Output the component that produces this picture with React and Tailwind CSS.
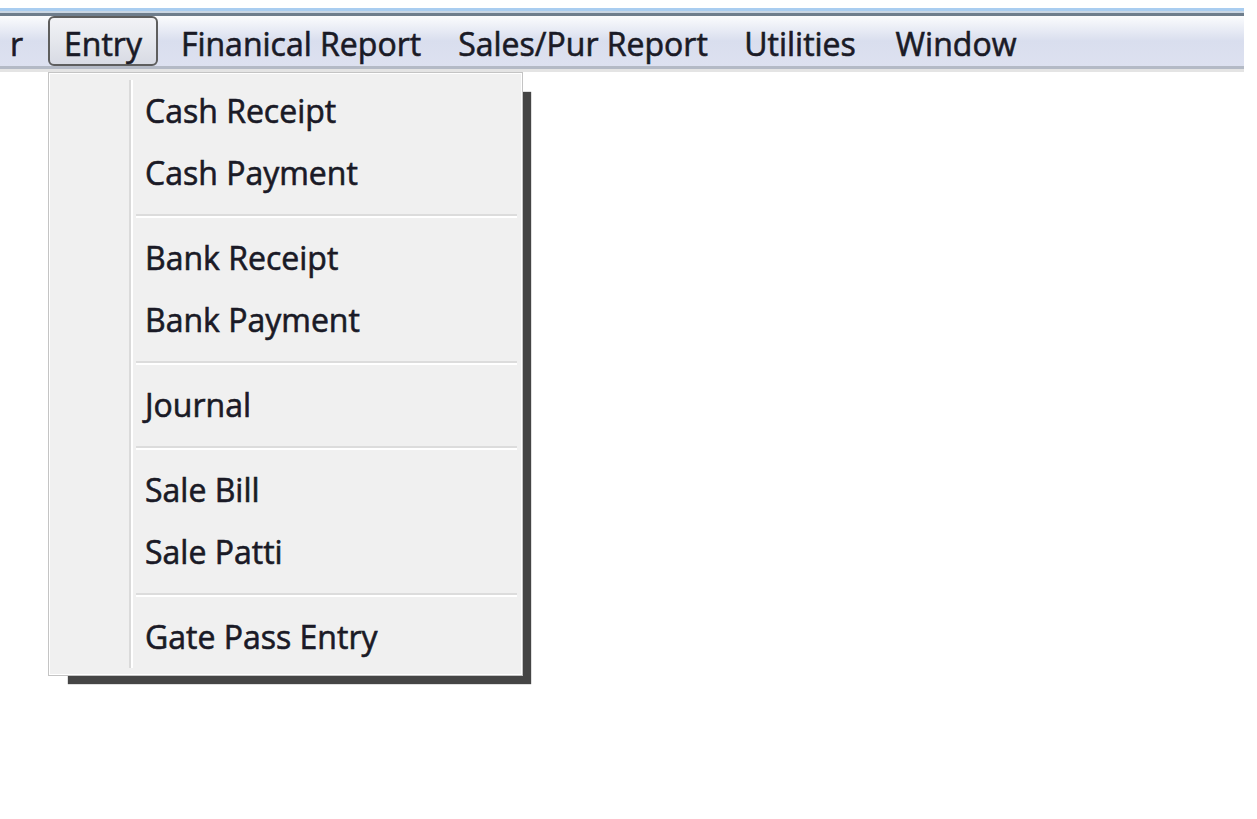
import React from "react";

const menuBar = [
  { label: "Entry", w: "w-[110px]", active: true },
  { label: "Finanical Report", w: "w-[286px]" },
  { label: "Sales/Pur Report", w: "w-[278px]" },
  { label: "Utilities", w: "w-[156px]" },
  { label: "Window", w: "w-[156px]" },
];

const groups = [
  ["Cash Receipt", "Cash Payment"],
  ["Bank Receipt", "Bank Payment"],
  ["Journal"],
  ["Sale Bill", "Sale Patti"],
  ["Gate Pass Entry"],
];

function Separator() {
  return (
    <div className="flex h-[23px] items-center pl-[3px] pr-[4px]">
      <div className="w-full">
        <div className="h-[2px] bg-[#dcdcdc]" />
        <div className="h-[2px] bg-white" />
      </div>
    </div>
  );
}

function Item({ label }) {
  return (
    <div className="flex h-[62px] items-center pl-[12px] text-[32px] leading-none text-[#1a1a26] [-webkit-text-stroke:0.6px_#1a1a26]">
      {label}
    </div>
  );
}

export default function App() {
  return (
    <div
      className="relative h-[819px] w-[1257px] bg-white"
      style={{ fontFamily: '"Open Sans", "Noto Sans", sans-serif' }}
    >
      <div className="h-[8px]" />
      <div className="w-[1244px]">
        <div className="h-[3px] bg-[#a9cdf0]" />
        <div className="h-[2px] bg-[#c9d6e3]" />
        <div className="h-[3px] bg-[#6e7d8c]" />
        <div className="flex h-[50px] items-center bg-gradient-to-b from-[#fbfcfd] via-[#d9deee] to-[#dde1f0] text-[32px] leading-none text-[#1a1a26] [-webkit-text-stroke:0.6px_#1a1a26]">
          <div className="w-[48px] pl-[10px] pt-[5px]">r</div>
          {menuBar.map((m) => (
            <div
              key={m.label}
              className={`flex h-[50px] items-center justify-center pt-[5px] ${m.w} ${
                m.active
                  ? "rounded-[6px] border-2 border-[#5e5e5e] bg-gradient-to-b from-[#f2f3f6] to-[#d8dbe4]"
                  : ""
              }`}
            >
              {m.label}
            </div>
          ))}
        </div>
        <div className="h-[3px] bg-[#b4bac6]" />
        <div className="h-[3px] bg-[#e4e4e4]" />
      </div>

      <div className="absolute left-[48px] top-[72px] w-[475px] border border-[#c4c4c4] bg-[#f0f0f0] shadow-[14px_14px_1px_-6px_#454545]">
        <div className="flex border border-white py-[6px]">
          <div className="w-[79px]" />
          <div className="flex w-[4px]">
            <div className="w-[2px] bg-[#dadada]" />
            <div className="w-[2px] bg-white" />
          </div>
          <div className="flex-1">
            {groups.map((g, i) => (
              <div key={i}>
                {i > 0 && <Separator />}
                {g.map((label) => (
                  <Item key={label} label={label} />
                ))}
              </div>
            ))}
          </div>
        </div>
      </div>
    </div>
  );
}
